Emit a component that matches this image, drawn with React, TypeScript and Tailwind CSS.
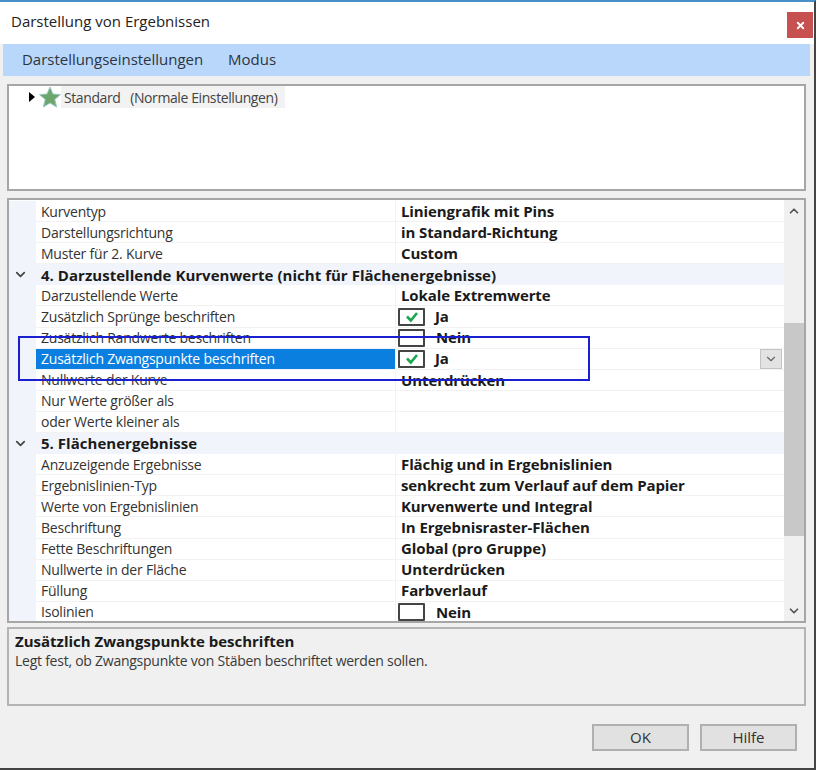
import React from 'react';
import { ChevronDown, ChevronUp, X } from 'lucide-react';

type Row =
  | { kind: 'section'; label: string }
  | { kind: 'text'; label: string; value?: string }
  | { kind: 'check'; label: string; checked: boolean; selected?: boolean };

const rows: Row[] = [
  { kind: 'text', label: 'Kurventyp', value: 'Liniengrafik mit Pins' },
  { kind: 'text', label: 'Darstellungsrichtung', value: 'in Standard-Richtung' },
  { kind: 'text', label: 'Muster für 2. Kurve', value: 'Custom' },
  { kind: 'section', label: '4. Darzustellende Kurvenwerte (nicht für Flächenergebnisse)' },
  { kind: 'text', label: 'Darzustellende Werte', value: 'Lokale Extremwerte' },
  { kind: 'check', label: 'Zusätzlich Sprünge beschriften', checked: true },
  { kind: 'check', label: 'Zusätzlich Randwerte beschriften', checked: false },
  { kind: 'check', label: 'Zusätzlich Zwangspunkte beschriften', checked: true, selected: true },
  { kind: 'text', label: 'Nullwerte der Kurve', value: 'Unterdrücken' },
  { kind: 'text', label: 'Nur Werte größer als' },
  { kind: 'text', label: 'oder Werte kleiner als' },
  { kind: 'section', label: '5. Flächenergebnisse' },
  { kind: 'text', label: 'Anzuzeigende Ergebnisse', value: 'Flächig und in Ergebnislinien' },
  { kind: 'text', label: 'Ergebnislinien-Typ', value: 'senkrecht zum Verlauf auf dem Papier' },
  { kind: 'text', label: 'Werte von Ergebnislinien', value: 'Kurvenwerte und Integral' },
  { kind: 'text', label: 'Beschriftung', value: 'In Ergebnisraster-Flächen' },
  { kind: 'text', label: 'Fette Beschriftungen', value: 'Global (pro Gruppe)' },
  { kind: 'text', label: 'Nullwerte in der Fläche', value: 'Unterdrücken' },
  { kind: 'text', label: 'Füllung', value: 'Farbverlauf' },
  { kind: 'check', label: 'Isolinien', checked: false },
];

const CheckBox: React.FC<{ checked: boolean }> = ({ checked }) => (
  <span className="-ml-[3px] w-[27px] h-[18px] border-2 border-[#444] bg-white flex items-center justify-center shrink-0 rounded-[1px]">
    {checked && (
      <svg width="14" height="12" viewBox="0 0 14 12" fill="none">
        <path d="M2 5.5 L5.8 9.5 L12 2" stroke="#1aa650" strokeWidth="2.6" />
      </svg>
    )}
  </span>
);

const GridRow: React.FC<{ row: Row }> = ({ row }) => {
  if (row.kind === 'section') {
    return (
      <div className="h-[21.1px] flex items-center bg-[#f1f4fa] shrink-0">
        <div className="w-[32px] flex pl-[4px] shrink-0">
          <ChevronDown size={15} strokeWidth={2.75} className="text-[#444]" />
        </div>
        <span className="text-[15px] font-bold tracking-[0.03px] text-[#1a1a1a] whitespace-nowrap">{row.label}</span>
      </div>
    );
  }
  const selected = row.kind === 'check' && row.selected;
  return (
    <div className="h-[21.1px] flex shrink-0 bg-[#f1f4fa]">
      <div className="w-[27px] shrink-0" />
      <div className={`w-[359px] shrink-0 flex items-center pl-[5px] border-b border-[#f2f2f2] text-[14px] tracking-[-0.22px] whitespace-nowrap ${selected ? 'bg-[#0a7fe0] text-white' : 'bg-white text-[#333]'}`}>
        {row.label}
      </div>
      <div className="flex-1 flex items-center border-b border-l border-[#f2f2f2] bg-white pl-[5px] text-[15px] font-bold tracking-[-0.1px] text-[#1a1a1a] whitespace-nowrap">
        {row.kind === 'check' ? (
          <>
            <CheckBox checked={row.checked} />
            <span className={row.checked ? 'ml-[10px]' : 'ml-[11px]'}>{row.checked ? 'Ja' : 'Nein'}</span>
          </>
        ) : (
          row.value
        )}
        {selected && (
          <span className="ml-auto mr-[2px] w-[22px] h-[20px] bg-[#e3e3e3] border border-[#c4c4c4] flex items-center justify-center">
            <ChevronDown size={14} className="text-[#666]" />
          </span>
        )}
      </div>
    </div>
  );
};

export default function App() {
  return (
    <div className="w-[818px] h-[772px] bg-white overflow-hidden" style={{ fontFamily: '"Open Sans", "Noto Sans", sans-serif' }}>
      <div className="relative w-[816px] h-[770px] bg-[#f0f0f0] border-t-2 border-t-[#4a90c8] border-r-2 border-r-[#444] border-b-2 border-b-[#444] flex flex-col">
        {/* title bar */}
        <div className="h-[42px] bg-white flex items-start justify-between shrink-0 pl-[11px]">
          <span className="mt-[9px] text-[15px] leading-5 text-[#222]">Darstellung von Ergebnissen</span>
          <div className="mt-[10px] mr-[1px] w-[26px] h-[26px] bg-[#c75050] flex items-center justify-center">
            <X size={11} strokeWidth={4} className="text-white" />
          </div>
        </div>

        {/* menu */}
        <div className="ml-[3px] mr-[4px] h-[32px] bg-[#b9d7fa] flex items-center gap-[25px] pl-[19px] pb-[2px] text-[15px] tracking-[-0.02px] text-[#2c3540] shrink-0">
          <span>Darstellungseinstellungen</span>
          <span>Modus</span>
        </div>

        {/* tree */}
        <div className="ml-[7px] mr-[8px] mt-[8px] h-[107px] border-2 border-[#a6a6a6] bg-white shrink-0 pl-[20px]">
          <div className="flex items-center h-[22px]">
            <span className="w-0 h-0 border-y-[5px] border-y-transparent border-l-[6px] border-l-black mr-[4px]" />
            <svg width="22" height="22" viewBox="0 0 22 22" className="shrink-0">
              <path d="M11 1 L14 8 L21.5 8.6 L15.8 13.4 L17.6 21 L11 17 L4.4 21 L6.2 13.4 L0.5 8.6 L8 8 Z" fill="#6ca66c" stroke="#9cc8c8" />
            </svg>
            <span className="bg-[#f2f2f2] h-[22px] flex items-center pl-[3px] pr-[8px] text-[14px] tracking-[-0.4px] text-[#444] whitespace-pre">
              Standard   (Normale Einstellungen)
            </span>
          </div>
        </div>

        {/* property grid */}
        <div className="ml-[7px] mr-[8px] mt-[7px] h-[425px] border-2 border-[#a6a6a6] bg-white shrink-0 flex overflow-hidden">
          <div className="flex-1 flex flex-col pt-px overflow-hidden">
            {rows.map((row) => (
              <GridRow key={row.label} row={row} />
            ))}
          </div>
          <div className="w-[20px] bg-[#f0f0f0] flex flex-col items-center shrink-0">
            <div className="h-[21px] flex items-center justify-center shrink-0">
              <ChevronUp size={14} strokeWidth={3} className="text-[#555]" />
            </div>
            <div className="mt-[102px] w-full h-[213px] bg-[#c8c8c8] shrink-0" />
            <div className="mt-auto h-[21px] flex items-center justify-center shrink-0">
              <ChevronDown size={14} strokeWidth={3} className="text-[#555]" />
            </div>
          </div>
        </div>

        {/* description */}
        <div className="ml-[7px] mr-[8px] mt-[4px] h-[79px] border-2 border-[#b4b4b4] bg-[#f0f0f0] shrink-0 pl-[6px] pt-[2px]">
          <div className="text-[15px] font-bold leading-[20px] text-[#1a1a1a]">Zusätzlich Zwangspunkte beschriften</div>
          <div className="text-[14px] leading-[20px] tracking-[-0.25px] text-[#3a3a3a]">Legt fest, ob Zwangspunkte von Stäben beschriftet werden sollen.</div>
        </div>

        {/* buttons */}
        <div className="mt-[18px] flex justify-end gap-[11px] pr-[17px] shrink-0">
          <button className="w-[97px] h-[27px] bg-[#e1e1e1] border-2 border-[#b0b0b0] text-[15px] text-[#333]">OK</button>
          <button className="w-[97px] h-[27px] bg-[#e1e1e1] border-2 border-[#b0b0b0] text-[15px] text-[#333]">Hilfe</button>
        </div>

        {/* highlight annotation */}
        <div className="absolute left-[18px] top-[334px] w-[572px] h-[45px] border-2 border-[#1a1fd0] pointer-events-none" />
      </div>
    </div>
  );
}
